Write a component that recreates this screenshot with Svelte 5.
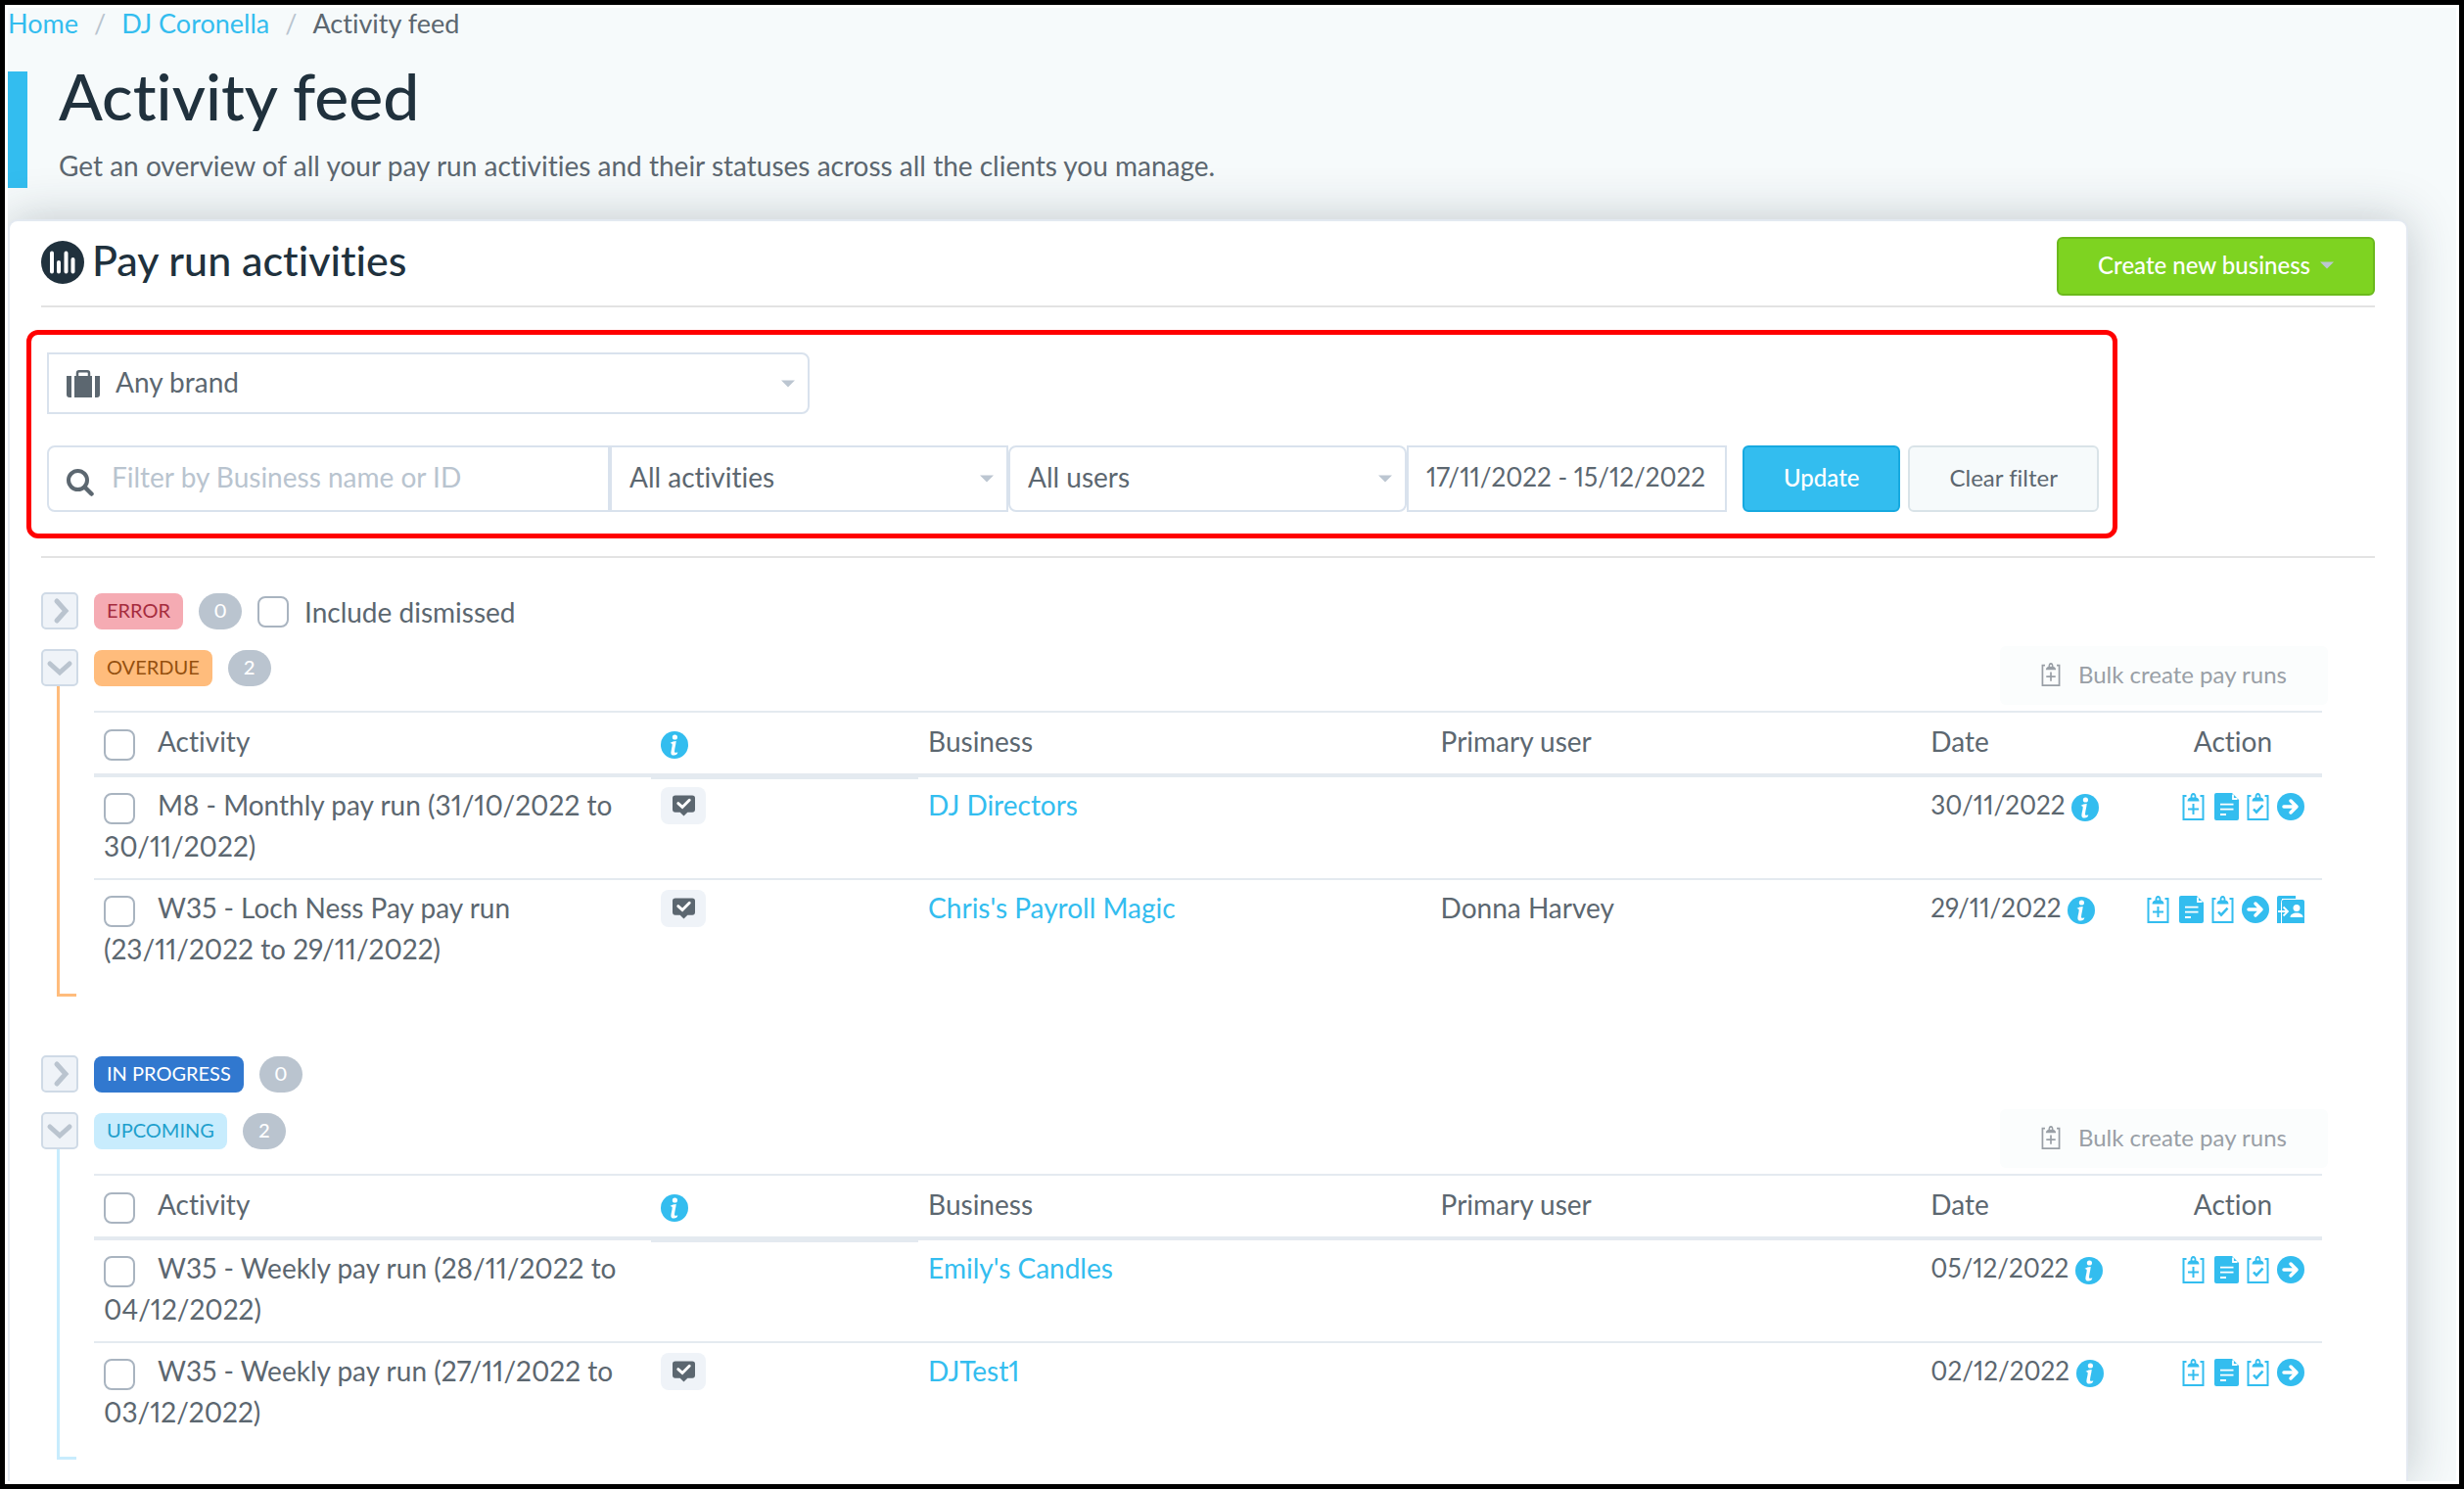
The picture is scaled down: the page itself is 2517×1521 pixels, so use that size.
<script>
  let search = "";
  let brand = "Any brand";
  let activity = "All activities";
  let user = "All users";
  let dates = "17/11/2022 - 15/12/2022";
  let includeDismissed = false;

  let groups = [
    { name: "Error", key: "error", dismissable: true, rows: [] },
    {
      name: "Overdue",
      key: "overdue",
      rows: [
        { activity: "M8 - Monthly pay run (31/10/2022 to 30/11/2022)", comment: true, business: "DJ Directors", user: "", date: "30/11/2022" },
        { activity: "W35 - Loch Ness Pay pay run (23/11/2022 to 29/11/2022)", comment: true, business: "Chris's Payroll Magic", user: "Donna Harvey", date: "29/11/2022", portal: true },
      ],
    },
    { name: "In progress", key: "progress", rows: [] },
    {
      name: "Upcoming",
      key: "upcoming",
      rows: [
        { activity: "W35 - Weekly pay run (28/11/2022 to 04/12/2022)", comment: false, business: "Emily's Candles", user: "", date: "05/12/2022" },
        { activity: "W35 - Weekly pay run (27/11/2022 to 03/12/2022)", comment: true, business: "DJTest1", user: "", date: "02/12/2022" },
      ],
    },
  ];

  groups = groups.map((group) => ({ ...group, open: group.rows.length > 0 }));

  let toggle = (group) => {
    group.open = !group.open;
    groups = groups;
  };

  let clearFilter = () => {
    search = "";
    brand = "Any brand";
    activity = "All activities";
    user = "All users";
  };
</script>

{#snippet caret()}
  <svg class="caret" viewBox="0 0 16 8" aria-hidden="true"><path d="M0 0h16L8 8z" /></svg>
{/snippet}

{#snippet info()}
  <svg class="info" viewBox="0 0 28 28" role="img" aria-label="Information">
    <circle cx="14" cy="14" r="14" fill="#33bdef" />
    <circle cx="14.4" cy="6" r="2.6" fill="#fff" />
    <path d="M9.4 11.9c2-1.3 4-2 6.300-2-.2 3.600-1.500 7-1.700 10.500 0 1.600 1.300 1.800 3.300.9-.2 2.300-1.700 3.300-4 3.300-2.200 0-3.100-1.200-2.900-3.200.2-2.700 1.300-5.300 1.300-7.900 0-.900-.9-1.200-2.300-1.600z" fill="#fff" />
  </svg>
{/snippet}

{#snippet clipboard(mark)}
  <svg class="clip" viewBox="0 0 22 28" aria-hidden="true">
    <path d="M4 3H1v24h20V3h-3" fill="none" stroke="currentColor" stroke-width="2" />
    <path fill-rule="evenodd" d="M5 8.500c0-2.500 1.500-3.500 3-3.800C8.200 1.500 9 0 11 0s2.800 1.500 3 4.700c1.500.3 3 1.300 3 3.800zM11 2.200a1.200 1.200 0 1 0 0 2.400 1.200 1.200 0 0 0 0-2.400z" fill="currentColor" />
    {#if mark === "plus"}
      <path d="M11 11v11M5.500 16.500h11" fill="none" stroke="currentColor" stroke-width="2" />
    {:else}
      <path d="M6.500 16.500l3 3.200 6.500-7" fill="none" stroke="currentColor" stroke-width="2.500" />
    {/if}
  </svg>
{/snippet}

<div class="page">
  <div class="content">
    <nav class="breadcrumb" aria-label="Breadcrumb">
      <a href="#home">Home</a>
      <span class="slash">/</span>
      <a href="#coronella">DJ Coronella</a>
      <span class="slash">/</span>
      <span>Activity feed</span>
    </nav>

    <header class="page-title">
      <h1>Activity feed</h1>
      <p>Get an overview of all your pay run activities and their statuses across all the clients you manage.</p>
    </header>

    <main class="card">
      <div class="card-header">
        <svg class="chart" viewBox="0 0 44 44" aria-hidden="true">
          <circle cx="22" cy="22" r="22" fill="#20313d" />
          <path d="M11 12.500v19M18 22v9.500M25.500 12.500v19M32.500 19v12.500" stroke="#fff" stroke-width="4" stroke-linecap="round" />
        </svg>
        <h2>Pay run activities</h2>
        <button class="btn green">Create new business {@render caret()}</button>
      </div>

      <form class="filters" on:submit|preventDefault>
        <div class="field brand">
          <svg class="case" viewBox="0 0 34 28" aria-hidden="true">
            <path d="M0 6h5v22H3a3 3 0 0 1-3-3zM29 6h5v19a3 3 0 0 1-3 3h-2zM8 6h18v22H8z" fill="#5c6770" />
            <path d="M11 6V3c0-1 .8-1.700 1.800-1.700h8.400c1 0 1.800.7 1.800 1.700v3" fill="none" stroke="#5c6770" stroke-width="2.500" />
          </svg>
          <select bind:value={brand} aria-label="Brand"><option>Any brand</option></select>
          {@render caret()}
        </div>
        <div class="filter-row">
          <div class="field search">
            <svg class="glass" viewBox="0 0 28 28" aria-hidden="true">
              <circle cx="11.500" cy="11.500" r="9.500" fill="none" stroke="#5c6770" stroke-width="4" />
              <path d="M18.500 18.500l7 7" stroke="#5c6770" stroke-width="4.500" stroke-linecap="round" />
            </svg>
            <input type="text" bind:value={search} placeholder="Filter by Business name or ID" aria-label="Filter by Business name or ID" />
          </div>
          <div class="field pick">
            <select bind:value={activity} aria-label="Activities"><option>All activities</option></select>
            {@render caret()}
          </div>
          <div class="field pick rounded">
            <select bind:value={user} aria-label="Users"><option>All users</option></select>
            {@render caret()}
          </div>
          <div class="field dates">
            <input type="text" bind:value={dates} aria-label="Date range" />
          </div>
          <button class="btn blue">Update</button>
          <button class="btn plain" type="button" on:click={clearFilter}>Clear filter</button>
        </div>
      </form>

      {#each groups as group}
        <section class="group {group.key}" class:open={group.open}>
          <div class="rail">
            <button class="toggle" aria-label="Toggle {group.name}" on:click={() => toggle(group)}>
              <svg viewBox="0 0 34 34" aria-hidden="true">
                <path d={group.open ? "M7 13l10 9 10-9" : "M14 7l9 10-9 10"} />
              </svg>
            </button>
            {#if group.open}<div class="line"></div>{/if}
          </div>

          <div class="group-body">
            <div class="group-header">
              <span class="status">{group.name}</span>
              <span class="count">{group.rows.length}</span>
              {#if group.dismissable}
                <label class="dismissed">
                  <input type="checkbox" bind:checked={includeDismissed} />
                  Include dismissed
                </label>
              {/if}
              {#if group.open}
                <button class="bulk" disabled>
                  {@render clipboard("plus")}
                  Bulk create pay runs
                </button>
              {/if}
            </div>

            {#if group.open}
              <table>
                <thead>
                  <tr>
                    <th class="c-activity"><label><input type="checkbox" />Activity</label></th>
                    <th class="c-note">{@render info()}</th>
                    <th class="c-business">Business</th>
                    <th class="c-user">Primary user</th>
                    <th class="c-date">Date</th>
                    <th class="c-action">Action</th>
                  </tr>
                </thead>
                <tbody>
                  {#each group.rows as row}
                    <tr>
                      <td><label><input type="checkbox" />{row.activity}</label></td>
                      <td>
                        {#if row.comment}
                          <button class="note" aria-label="Comments">
                            <svg viewBox="0 0 24 22" aria-hidden="true">
                              <path d="M3 0h18a3 3 0 0 1 3 3v12a3 3 0 0 1-3 3h-5l-4 4-4-4H3a3 3 0 0 1-3-3V3a3 3 0 0 1 3-3z" fill="#5c6770" />
                              <path d="M6 8.500l4.500 4L18 5" fill="none" stroke="#fff" stroke-width="3" stroke-linecap="round" />
                            </svg>
                          </button>
                        {/if}
                      </td>
                      <td><a href="#business">{row.business}</a></td>
                      <td>{row.user}</td>
                      <td class="date">{row.date} {@render info()}</td>
                      <td>
                        <div class="actions">
                          <button aria-label="Create pay run">{@render clipboard("plus")}</button>
                          <button class="report" aria-label="View report">
                            <svg class="doc" viewBox="0 0 25 28" aria-hidden="true">
                              <path d="M2 0h16l7 7v19a2 2 0 0 1-2 2H2a2 2 0 0 1-2-2V2a2 2 0 0 1 2-2z" fill="currentColor" />
                              <path d="M19 1.500V6h4.500M6 11.700h13.500M6 16.700h13.500M6 22h6" fill="none" stroke="#fff" stroke-width="1.800" />
                            </svg>
                          </button>
                          <button aria-label="Complete pay run">{@render clipboard("check")}</button>
                          <button aria-label="Open pay run">
                            <svg class="wide" viewBox="0 0 28 28" aria-hidden="true">
                              <circle cx="14" cy="14" r="14" fill="currentColor" />
                              <path d="M7 14h12M14 8l6 6-6 6" fill="none" stroke="#fff" stroke-width="3.500" stroke-linecap="round" stroke-linejoin="round" />
                            </svg>
                          </button>
                          {#if row.portal}
                            <button aria-label="Client portal">
                              <svg class="wide" viewBox="0 0 28 28" aria-hidden="true">
                                <path d="M2 0h17v3H5v25H0V2a2 2 0 0 1 2-2z" fill="currentColor" />
                                <path d="M5 4h21a2 2 0 0 1 2 2v22H5z" fill="currentColor" />
                                <path d="M4.500 28V6.500a2.500 2.500 0 0 1 2.500-3h13" fill="none" stroke="#fff" />
                                <path d="M1 16h9.500M6.500 11.500l4.500 4.500-4.500 4.500" fill="none" stroke="#fff" stroke-width="1.800" />
                                <circle cx="20" cy="12.500" r="3.500" fill="#fff" />
                                <path d="M13.500 22c0-3 3-4.500 6.500-4.500s6.500 1.500 6.500 4.500z" fill="#fff" />
                              </svg>
                            </button>
                          {/if}
                        </div>
                      </td>
                    </tr>
                  {/each}
                </tbody>
              </table>
            {/if}
          </div>
        </section>
      {/each}
    </main>
  </div>
</div>

<style>
  :global(body) {
    background: #fff;
  }

  * {
    box-sizing: border-box;
  }

  .page {
    display: flex;
    min-height: 100vh;
    padding: 3px;
    border: 5px solid #000;
    font-family: Lato, "Open Sans", sans-serif;
    font-size: 28px;
    font-variant-ligatures: none;
    font-variant-numeric: proportional-nums;
    line-height: 42px;
    color: #5c6770;
  }

  .content {
    flex: 1;
    display: flex;
    flex-direction: column;
    min-width: 0;
    padding-right: 49px;
    overflow: hidden;
    background: #f6fafb;
  }

  a {
    color: #33bdef;
    text-decoration: none;
  }

  button, input, select {
    font: inherit;
    color: inherit;
  }

  button {
    cursor: pointer;
  }

  svg {
    display: block;
    flex: none;
  }

  .breadcrumb {
    display: flex;
    gap: 16px;
    font-size: 27px;
    line-height: 32px;
  }

  .slash {
    color: #b9c4cf;
  }

  .page-title {
    margin-top: 33px;
    padding-left: 32px;
    border-left: 20px solid #33bdef;
  }

  h1, h2, p {
    margin: 0;
    font-weight: 500;
  }

  h1 {
    font-size: 66px;
    line-height: 50px;
    color: #20313d;
  }

  p {
    padding: 25px 0 2px;
    font-weight: 400;
  }

  .card {
    flex: 1;
    margin-top: 32px;
    padding: 0 32px 22px;
    border: 2px solid #e3e9f1;
    border-bottom: 0;
    border-radius: 10px 10px 0 0;
    background: #fff;
    box-shadow: 0 0 50px rgba(32, 49, 61, 0.25);
  }

  .card-header {
    display: flex;
    align-items: center;
    gap: 8px;
    height: 88px;
    padding-top: 6px;
    border-bottom: 2px solid #e3e3e3;
  }

  .chart {
    width: 44px;
    height: 44px;
    margin-bottom: 8px;
  }

  h2 {
    flex: 1;
    padding-bottom: 12px;
    font-size: 43px;
    color: #20313d;
  }

  .btn {
    display: flex;
    align-items: center;
    padding: 0 40px 2px;
    border: 2px solid;
    border-radius: 6px;
    font-size: 24px;
    white-space: nowrap;
  }

  .green {
    gap: 10px;
    height: 60px;
    border-color: #6bb91c;
    background: #7ed321;
    color: #fff;
    font-weight: 500;
  }

  .blue {
    margin-left: 16px;
    border-color: #16a9e0;
    background: #33bdef;
    color: #fff;
    font-weight: 500;
  }

  .plain {
    margin-left: 8px;
    border-color: #d9e3e8;
    background: #f6fafb;
  }

  .caret {
    width: 14px;
    height: 8px;
    fill: #bcc6d1;
  }

  /* red frame sits 15px outside the card's left gutter */
  .filters {
    position: relative;
    margin-bottom: 35px;
    padding: 46px 0 45px 6px;
    border-bottom: 2px solid #e3e3e3;
  }

  .filters::before {
    content: "";
    position: absolute;
    inset: 23px 263px 18px -15px;
    border: 5px solid #f00;
    border-radius: 12px;
    pointer-events: none;
  }

  .field {
    position: relative;
    display: flex;
    align-items: center;
    border: 2px solid #d9e2ed;
    background: #fff;
  }

  .field select, .field input {
    flex: 1;
    width: 100%;
    min-width: 0;
    height: 100%;
    padding: 0 18px 4px;
    border: 0;
    background: none;
    outline: 0;
    appearance: none;
  }

  .field .caret {
    position: absolute;
    right: 13px;
    pointer-events: none;
  }

  .brand {
    width: 779px;
    height: 63px;
    margin-bottom: 32px;
    padding-left: 18px;
    border-radius: 0 8px 8px 0;
  }

  .brand select {
    padding-left: 16px;
  }

  .case {
    width: 34px;
    height: 28px;
  }

  .filter-row {
    display: flex;
    height: 68px;
  }

  .search {
    width: 575px;
    padding-left: 18px;
    border-radius: 8px 0 0 8px;
  }

  .search input::placeholder {
    color: #b9c4cf;
  }

  .glass {
    width: 28px;
    height: 28px;
    margin-top: 8px;
  }

  .pick {
    width: 407px;
  }

  .rounded {
    border-radius: 8px;
  }

  .dates {
    width: 327px;
    font-size: 26px;
  }

  .group {
    display: flex;
    gap: 16px;
    margin-bottom: 20px;
  }

  .group.open {
    margin-bottom: 60px;
  }

  .group:last-child {
    margin-bottom: 0;
  }

  .rail {
    display: flex;
    flex-direction: column;
    width: 38px;
  }

  .toggle {
    width: 38px;
    height: 38px;
    padding: 0;
    border: 2px solid #cfdae6;
    border-radius: 5px;
    background: #eff3f8;
  }

  .toggle path {
    fill: none;
    stroke: #bac4cf;
    stroke-width: 5;
    stroke-linecap: round;
  }

  .line {
    flex: 1;
    width: 20px;
    margin-left: 16px;
    border: solid #ffbc7c;
    border-width: 0 0 3px 3px;
  }

  .upcoming .line {
    border-color: #c8ecfd;
  }

  .group-body {
    flex: 1;
    min-width: 0;
    padding-right: 54px;
  }

  .open .group-body {
    padding-bottom: 16px;
  }

  .group-header {
    display: flex;
    align-items: flex-start;
    gap: 16px;
    height: 38px;
    padding-top: 1px;
  }

  .open .group-header {
    height: 63px;
  }

  .status, .count {
    height: 37px;
    font-size: 20px;
    line-height: 35px;
  }

  .status {
    padding: 0 13px;
    border-radius: 8px;
    text-transform: uppercase;
  }

  .error .status {
    background: #f5abb3;
    color: #a62c3e;
  }

  .overdue .status {
    background: #ffbc7c;
    color: #94500f;
  }

  .progress .status {
    background: #3178cf;
    color: #fff;
  }

  .upcoming .status {
    background: #c8ecfd;
    color: #219fcc;
  }

  .count {
    width: 44px;
    border-radius: 19px;
    background: #bac4cf;
    color: #fff;
    font-weight: 500;
    text-align: center;
  }

  .dismissed {
    display: flex;
    align-items: center;
    gap: 16px;
    height: 38px;
  }

  input[type="checkbox"] {
    width: 32px;
    height: 32px;
    margin: 0 23px 0 0;
    border: 2px solid #a9b4c0;
    border-radius: 8px;
    background: #fff;
    vertical-align: middle;
    appearance: none;
  }

  .dismissed input[type="checkbox"] {
    margin: 0;
  }

  input[type="checkbox"]:checked {
    background: #33bdef;
  }

  .bulk {
    display: flex;
    align-items: center;
    gap: 18px;
    height: 60px;
    margin: -4px -6px 0 auto;
    padding: 0 42px 2px;
    border: 0;
    border-radius: 6px;
    background: #fbfdfd;
    color: #999fa6;
    font-size: 24px;
  }

  .bulk .clip {
    width: 20px;
    height: 24px;
  }

  table {
    width: 100%;
    border-top: 2px solid #e4eaf0;
    border-spacing: 0;
    table-layout: fixed;
  }

  th, td {
    padding: 7px 10px 12px;
    font-weight: 400;
    text-align: left;
    vertical-align: top;
  }

  th {
    padding-top: 8px;
    border-bottom: 4px solid #e4eaf0;
  }

  tr + tr td {
    border-top: 2px solid #e4eaf0;
  }

  .c-activity {
    width: 25%;
  }

  .c-note {
    width: 12%;
    box-shadow: 0 2px #e4eaf0;
  }

  .c-business {
    width: 23%;
  }

  .c-user {
    width: 22%;
  }

  .c-date {
    width: 10%;
  }

  .c-action {
    width: 8%;
    text-align: center;
  }

  .info {
    display: inline-block;
    width: 28px;
    height: 28px;
    vertical-align: middle;
  }

  .date {
    font-size: 26px;
    white-space: nowrap;
  }

  .note {
    display: flex;
    align-items: center;
    justify-content: center;
    width: 46px;
    height: 38px;
    margin-top: 3px;
    padding: 0;
    border: 0;
    border-radius: 8px;
    background: #eff3f8;
  }

  .note svg {
    width: 23px;
    height: 22px;
  }

  .actions {
    display: flex;
    justify-content: flex-end;
    gap: 8px;
    padding: 9px 8px 0 0;
  }

  .actions button {
    padding: 0;
    border: 0;
    background: none;
    color: #33bdef;
  }

  .actions .report {
    margin-left: 2px;
  }

  .clip {
    width: 23px;
    height: 28px;
  }

  .doc {
    width: 25px;
    height: 28px;
  }

  .wide {
    width: 28px;
    height: 28px;
  }
</style>
